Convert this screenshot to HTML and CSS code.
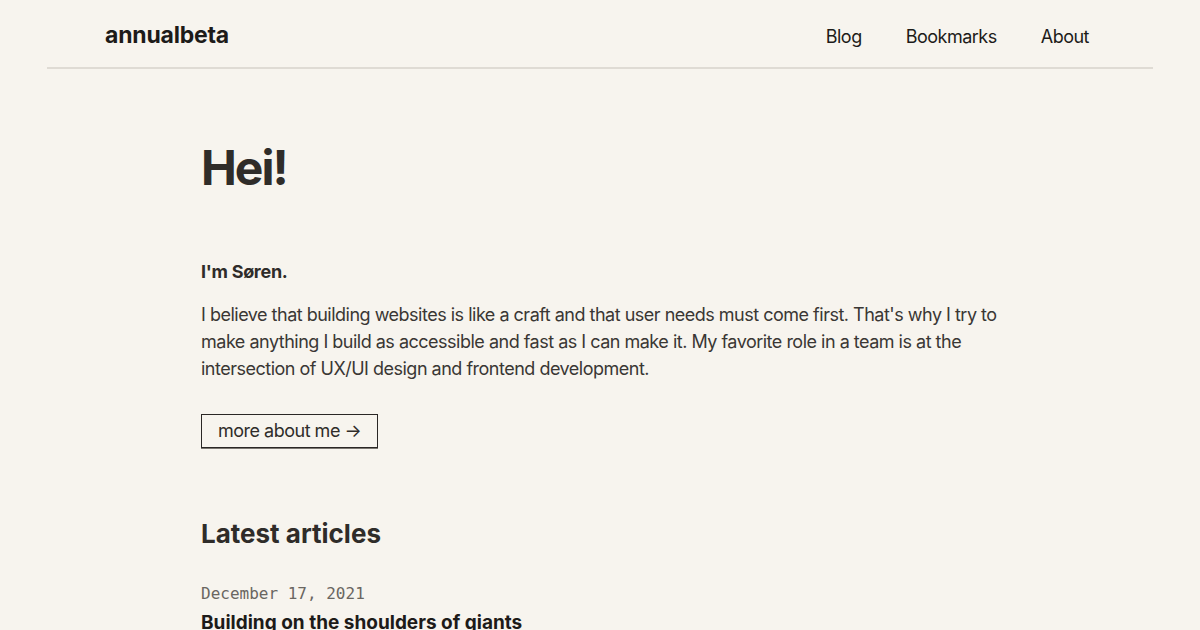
FILE: index.html
```html
<!DOCTYPE html>
<html lang="en">
<head>
<meta charset="utf-8">
<title>annualbeta</title>
<link rel="stylesheet" href="styles.css">
</head>
<body>
<header class="site-header">
  <a class="logo" href="#">annualbeta</a>
  <nav class="nav">
    <a href="#">Blog</a>
    <a href="#">Bookmarks</a>
    <a href="#">About</a>
  </nav>
</header>
<main class="content">
  <h1 class="title">Hei!</h1>
  <p class="intro">I'm Søren.</p>
  <p class="text">I believe that building websites is like a craft and that user needs must come first. That's why I try to make anything I build as accessible and fast as I can make it. My favorite role in a team is at the intersection of UX/UI design and frontend development.</p>
  <a class="button" href="#">more about me →</a>
  <h2 class="section-title">Latest articles</h2>
  <article class="post">
    <time class="date">December 17, 2021</time>
    <h3 class="post-title">Building on the shoulders of giants</h3>
  </article>
</main>
</body>
</html>
```
FILE: styles.css
```css
html, body {
  margin: 0;
  padding: 0;
}
body {
  background: #f7f4ee;
  color: #2f2c29;
  font-family: Inter, "Noto Sans", sans-serif;
  overflow: hidden;
}
a {
  color: inherit;
  text-decoration: none;
}
.site-header {
  margin: 0 47px;
  padding: 5px 64px 0 58px;
  height: 62px;
  display: flex;
  align-items: center;
  justify-content: space-between;
  border-bottom: 2px solid #dfdbd4;
  box-sizing: content-box;
}
.logo {
  font-size: 23px;
  font-weight: 700;
  color: #1d1b19;
  letter-spacing: -0.2px;
  margin-top: -3px;
}
.nav {
  display: flex;
  gap: 44px;
}
.nav a {
  font-size: 18px;
  letter-spacing: -0.5px;
  color: #1d1b19;
}
.content {
  width: 800px;
  margin: 0 auto;
  padding-left: 2px;
  padding-top: 70px;
}
.title {
  font-size: 48px;
  font-weight: 700;
  letter-spacing: -2px;
  line-height: 58px;
  margin: 0 0 63px;
}
.intro {
  font-size: 18px;
  font-weight: 700;
  letter-spacing: -0.3px;
  margin: 0 0 17px;
  line-height: 24px;
}
.text {
  font-size: 18px;
  letter-spacing: -0.5px;
  line-height: 27px;
  margin: 0 0 32px;
  color: #3a3734;
}
.button {
  display: inline-block;
  font-size: 18px;
  letter-spacing: -0.5px;
  line-height: 32px;
  padding: 0 16px;
  border: 1px solid #2a2725;
  box-shadow: 0 1px 0 #7a7670;
  color: #2f2c29;
}
.section-title {
  font-size: 26px;
  font-weight: 700;
  margin: 69px 0 31px;
  line-height: 34px;
}
.date {
  display: block;
  font-family: "DejaVu Sans Mono", monospace;
  font-size: 16px;
  color: #6a6661;
  line-height: 24px;
}
.post-title {
  font-size: 19px;
  font-weight: 700;
  margin: 4px 0 0;
  line-height: 26px;
  color: #1d1b19;
}
```
